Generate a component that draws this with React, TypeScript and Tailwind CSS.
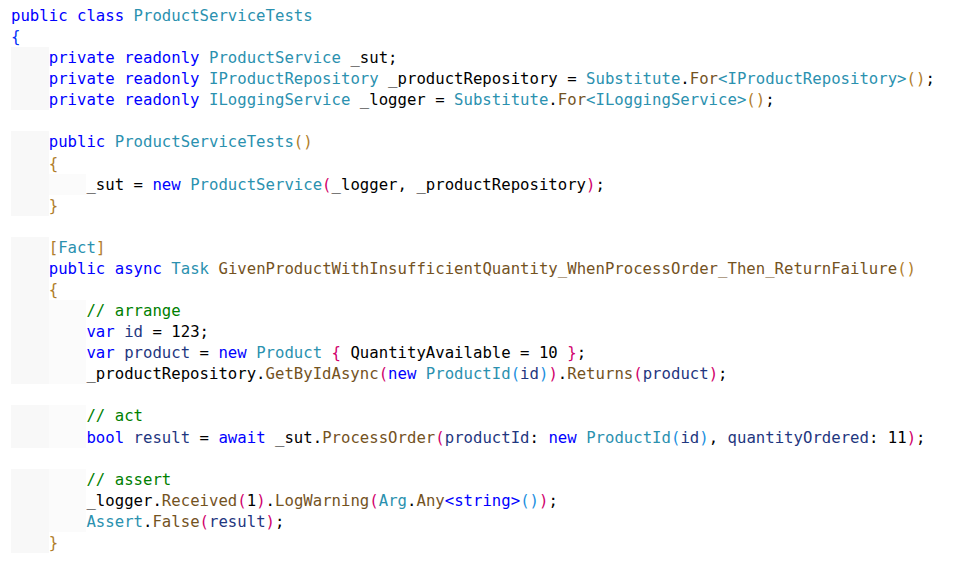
import React from "react";

type Seg = [string, string];

const K = "#0000ff";
const T = "#2b91af";
const M = "#74531f";
const C = "#008000";
const L = "#1f377f";
const D = "#000000";
const B1 = "#0431fa";
const B2 = "#b07d2b";
const B3 = "#d1006c";
const B4 = "#1c8fe0";

type Line = { indent: number; segs: Seg[] };

const lines: Line[] = [
  { indent: 0, segs: [[K, "public"], [D, " "], [K, "class"], [D, " "], [T, "ProductServiceTests"]] },
  { indent: 0, segs: [[B1, "{"]] },
  { indent: 1, segs: [[K, "private"], [D, " "], [K, "readonly"], [D, " "], [T, "ProductService"], [D, " _sut;"]] },
  {
    indent: 1,
    segs: [
      [K, "private"], [D, " "], [K, "readonly"], [D, " "], [T, "IProductRepository"], [D, " _productRepository = "],
      [T, "Substitute"], [D, "."], [M, "For"], [T, "<IProductRepository>"], [B2, "()"], [D, ";"],
    ],
  },
  {
    indent: 1,
    segs: [
      [K, "private"], [D, " "], [K, "readonly"], [D, " "], [T, "ILoggingService"], [D, " _logger = "],
      [T, "Substitute"], [D, "."], [M, "For"], [T, "<ILoggingService>"], [B2, "()"], [D, ";"],
    ],
  },
  { indent: -1, segs: [] },
  { indent: 1, segs: [[K, "public"], [D, " "], [T, "ProductServiceTests"], [B2, "()"]] },
  { indent: 1, segs: [[B2, "{"]] },
  {
    indent: 2,
    segs: [[D, "_sut = "], [K, "new"], [D, " "], [T, "ProductService"], [B3, "("], [D, "_logger, _productRepository"], [B3, ")"], [D, ";"]],
  },
  { indent: 1, segs: [[B2, "}"]] },
  { indent: -1, segs: [] },
  { indent: 1, segs: [[B2, "["], [T, "Fact"], [B2, "]"]] },
  {
    indent: 1,
    segs: [
      [K, "public"], [D, " "], [K, "async"], [D, " "], [T, "Task"], [D, " "],
      [M, "GivenProductWithInsufficientQuantity_WhenProcessOrder_Then_ReturnFailure"], [B2, "()"],
    ],
  },
  { indent: 1, segs: [[B2, "{"]] },
  { indent: 2, segs: [[C, "// arrange"]] },
  { indent: 2, segs: [[K, "var"], [D, " "], [L, "id"], [D, " = 123;"]] },
  {
    indent: 2,
    segs: [
      [K, "var"], [D, " "], [L, "product"], [D, " = "], [K, "new"], [D, " "], [T, "Product"], [D, " "], [B3, "{"],
      [D, " QuantityAvailable = 10 "], [B3, "}"], [D, ";"],
    ],
  },
  {
    indent: 2,
    segs: [
      [D, "_productRepository."], [M, "GetByIdAsync"], [B3, "("], [K, "new"], [D, " "], [T, "ProductId"], [B4, "("], [L, "id"],
      [B4, ")"], [B3, ")"], [D, "."], [M, "Returns"], [B3, "("], [L, "product"], [B3, ")"], [D, ";"],
    ],
  },
  { indent: -1, segs: [] },
  { indent: 2, segs: [[C, "// act"]] },
  {
    indent: 2,
    segs: [
      [K, "bool"], [D, " "], [L, "result"], [D, " = "], [K, "await"], [D, " _sut."], [M, "ProcessOrder"], [B3, "("], [L, "productId"],
      [D, ": "], [K, "new"], [D, " "], [T, "ProductId"], [B4, "("], [L, "id"], [B4, ")"], [D, ", "], [L, "quantityOrdered"],
      [D, ": 11"], [B3, ")"], [D, ";"],
    ],
  },
  { indent: -1, segs: [] },
  { indent: 2, segs: [[C, "// assert"]] },
  {
    indent: 2,
    segs: [
      [D, "_logger."], [M, "Received"], [B3, "("], [D, "1"], [B3, ")"], [D, "."], [M, "LogWarning"], [B3, "("], [T, "Arg"], [D, "."],
      [M, "Any"], [K, "<string>"], [B4, "()"], [B3, ")"], [D, ";"],
    ],
  },
  { indent: 2, segs: [[T, "Assert"], [D, "."], [M, "False"], [B3, "("], [L, "result"], [B3, ")"], [D, ";"]] },
  { indent: 1, segs: [[B2, "}"]] },
];

function Indent({ level }: { level: number }) {
  if (level <= 0) return null;
  return (
    <>
      <span className="bg-[#f8f8f8]">{"    "}</span>
      {level >= 2 && <span className="bg-[#fbfbfb]">{"    "}</span>}
    </>
  );
}

export default function App() {
  return (
    <div className="w-[963px] h-[563px] bg-white overflow-hidden">
      <div
        className="pl-[11px] pt-[5px] text-[15.66px] leading-[21.08px] whitespace-pre"
        style={{ fontFamily: '"DejaVu Sans Mono", "Liberation Mono", monospace' }}
      >
        {lines.map((ln, i) => (
          <div key={i} className="flex h-[21.08px]">
            <Indent level={ln.indent} />
            {ln.segs.map((s, j) => (
              <span key={j} style={{ color: s[0] }}>
                {s[1]}
              </span>
            ))}
          </div>
        ))}
      </div>
    </div>
  );
}
